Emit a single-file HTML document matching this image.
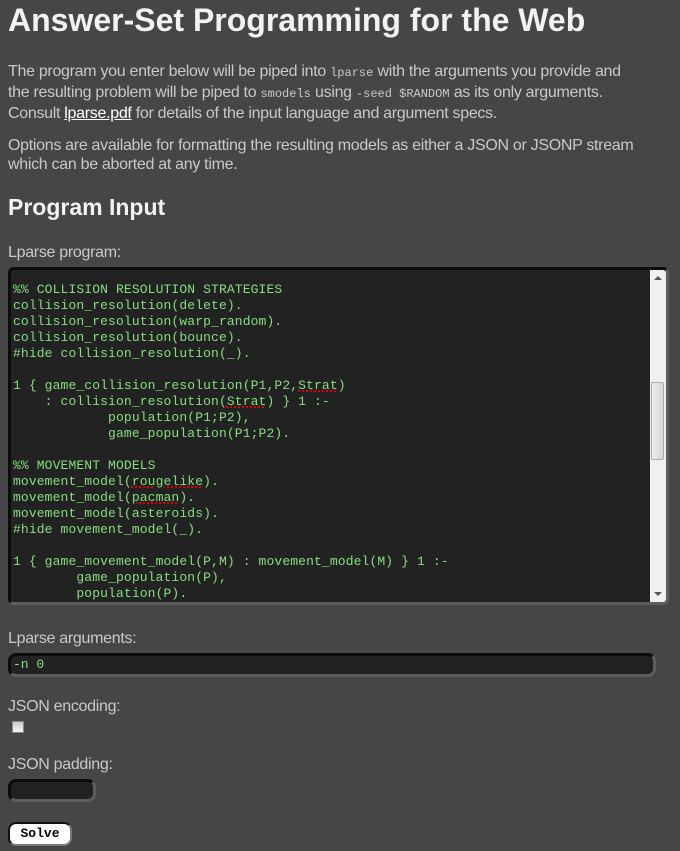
<!DOCTYPE html>
<html><head><meta charset="utf-8"><style>
html,body{margin:0;padding:0;width:680px;height:851px;overflow:hidden;background:#464646;font-family:"Liberation Sans",Arial,sans-serif;color:#c9c9c9;}
h1{position:absolute;left:8px;top:2px;margin:0;font-size:32px;font-weight:bold;color:#f2f2f2;}
h2{position:absolute;left:8px;top:194px;margin:0;font-size:23px;font-weight:bold;color:#f2f2f2;}
p{position:absolute;left:8px;margin:0;font-size:16px;line-height:19px;letter-spacing:-0.3px;white-space:nowrap;}
code{font-family:"Liberation Mono",monospace;font-size:12px;letter-spacing:0;}
a{color:#fff;text-decoration:underline;}
.lbl{position:absolute;left:8px;font-size:16px;letter-spacing:-0.3px;}
.ta{position:absolute;left:8px;top:267px;width:661px;height:338px;background:#222;border-radius:6px;border-top:3px solid #0c0c0c;border-left:3px solid #0c0c0c;border-right:3px solid #5e5e5e;border-bottom:3px solid #5e5e5e;box-sizing:border-box;overflow:hidden;}
pre{margin:0;position:absolute;left:2px;top:12px;font-family:"Liberation Mono",monospace;font-size:13px;letter-spacing:0.12px;line-height:16px;color:#84e07c;}
.u{text-decoration:underline dotted #e00000;text-decoration-thickness:2px;}
.sb{position:absolute;right:0;top:0;width:16px;height:100%;background:#f0f0f0;}
.th{position:absolute;left:1px;top:112px;width:13px;height:78px;background:linear-gradient(90deg,#eee,#d8d8d8);border:1px solid #aaa;border-radius:2px;box-sizing:border-box;}
.inp{position:absolute;background:#222;border-radius:8px;border-top:3px solid #0c0c0c;border-left:3px solid #0c0c0c;border-right:3px solid #5e5e5e;border-bottom:3px solid #5e5e5e;box-sizing:border-box;font-family:"Liberation Mono",monospace;font-size:13px;color:#84e07c;}
</style></head><body>
<h1>Answer-Set Programming for the Web</h1>
<p style="top:62px">The program you enter below will be piped into <code>lparse</code> with the arguments you provide and<br>the resulting problem will be piped to <code>smodels</code> using <code>-seed $RANDOM</code> as its only arguments.<br>Consult <a>lparse.pdf</a> for details of the input language and argument specs.</p>
<p style="top:136px">Options are available for formatting the resulting models as either a JSON or JSONP stream<br>which can be aborted at any time.</p>
<h2>Program Input</h2>
<div class="lbl" style="top:244px">Lparse program:</div>
<div class="ta"><pre>%% COLLISION RESOLUTION STRATEGIES
collision_resolution(delete).
collision_resolution(warp_random).
collision_resolution(bounce).
#hide collision_resolution(_).

1 { game_collision_resolution(P1,P2,<span class="u">Strat</span>)
    : collision_resolution(<span class="u">Strat</span>) } 1 :-
            population(P1;P2),
            game_population(P1;P2).

%% MOVEMENT MODELS
movement_model(<span class="u">rougelike</span>).
movement_model(<span class="u">pacman</span>).
movement_model(asteroids).
#hide movement_model(_).

1 { game_movement_model(P,M) : movement_model(M) } 1 :-
        game_population(P),
        population(P).</pre>
<div class="sb"><div style="position:absolute;left:4px;top:6px;border-left:4px solid transparent;border-right:4px solid transparent;border-bottom:4px solid #555"></div><div class="th"></div><div style="position:absolute;left:4px;bottom:6px;border-left:4px solid transparent;border-right:4px solid transparent;border-top:4px solid #555"></div></div></div>
<div class="lbl" style="top:630px">Lparse arguments:</div>
<div class="inp" style="left:8px;top:653px;width:648px;height:24px;padding-left:2px;line-height:17px">-n 0</div>
<div class="lbl" style="top:698px">JSON encoding:</div>
<div style="position:absolute;left:12px;top:721px;width:12px;height:12px;background:linear-gradient(#ccc,#f4f4f4);border:1px solid #888;box-sizing:border-box"></div>
<div class="lbl" style="top:756px">JSON padding:</div>
<div class="inp" style="left:8px;top:779px;width:88px;height:23px"></div>
<div style="position:absolute;left:8px;top:822px;width:64px;height:24px;background:#fff;border-radius:8px;border-top:2px solid #111;border-left:2px solid #111;border-right:2px solid #777;border-bottom:2px solid #777;box-sizing:border-box;font-family:'Liberation Mono',monospace;font-size:13px;font-weight:bold;color:#000;text-align:center;line-height:20px">Solve</div>
</body></html>
